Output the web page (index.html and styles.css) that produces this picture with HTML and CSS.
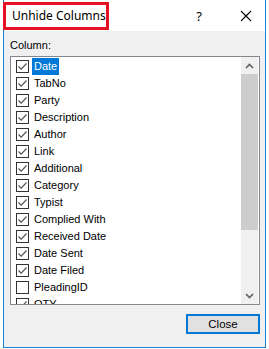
FILE: index.html
```html
<!DOCTYPE html>
<html lang="en">
<head>
    <meta charset="UTF-8">
    <title>Unhide Columns</title>
    <link rel="stylesheet" href="styles.css">
</head>
<body>
<div class="dialog">
    <!-- Title bar -->
    <div class="titlebar">
        <span class="title">Unhide Columns</span>
        <span class="mark"></span>
        <span class="help">?</span>
        <span class="close-x">
            <svg width="12" height="12" viewBox="0 0 12 12"><path d="M1 1 L11 11 M11 1 L1 11" stroke="#000" stroke-width="1.1" fill="none"/></svg>
        </span>
    </div>

    <!-- Body -->
    <div class="content">
        <div class="label">Column:</div>
        <div class="listbox">
            <div class="items">
                <div class="item"><span class="box on"></span><span class="text selected">Date</span></div>
                <div class="item"><span class="box on"></span><span class="text">TabNo</span></div>
                <div class="item"><span class="box on"></span><span class="text">Party</span></div>
                <div class="item"><span class="box on"></span><span class="text">Description</span></div>
                <div class="item"><span class="box on"></span><span class="text">Author</span></div>
                <div class="item"><span class="box on"></span><span class="text">Link</span></div>
                <div class="item"><span class="box on"></span><span class="text">Additional</span></div>
                <div class="item"><span class="box on"></span><span class="text">Category</span></div>
                <div class="item"><span class="box on"></span><span class="text">Typist</span></div>
                <div class="item"><span class="box on"></span><span class="text">Complied With</span></div>
                <div class="item"><span class="box on"></span><span class="text">Received Date</span></div>
                <div class="item"><span class="box on"></span><span class="text">Date Sent</span></div>
                <div class="item"><span class="box on"></span><span class="text">Date Filed</span></div>
                <div class="item"><span class="box"></span><span class="text">PleadingID</span></div>
                <div class="item"><span class="box on"></span><span class="text">QTY</span></div>
            </div>
            <div class="scrollbar">
                <div class="arrow">
                    <svg width="9" height="6" viewBox="0 0 9 6"><path d="M1 5 L4.5 1.5 L8 5" stroke="#606060" stroke-width="1.6" fill="none"/></svg>
                </div>
                <div class="track"><div class="thumb"></div></div>
                <div class="arrow">
                    <svg width="9" height="6" viewBox="0 0 9 6"><path d="M1 1 L4.5 4.5 L8 1" stroke="#606060" stroke-width="1.6" fill="none"/></svg>
                </div>
            </div>
        </div>
        <div class="buttons">
            <button class="btn">Close</button>
        </div>
    </div>
</div>
</body>
</html>
```

FILE: styles.css
```css
* {
    margin: 0;
    padding: 0;
    box-sizing: border-box;
}
body {
    background: #fff;
    font-family: 'Noto Sans', 'Liberation Sans', sans-serif;
    color: #000;
}

/* Окно диалога */
.dialog {
    position: relative;
    margin-left: 3px;
    width: 263px;
    height: 348px;
    border: 1px solid #1883d7;
    border-top: none;
    background: #f0f0f0;
    display: flex;
    flex-direction: column;
}

/* Заголовок */
.titlebar {
    height: 31px;
    background: #fff;
    display: flex;
    align-items: center;
    padding-left: 8px;
}
.title {
    font-size: 12px;
    flex: 1;
}
.mark {
    position: absolute;
    left: -1px;
    top: 2px;
    width: 106px;
    height: 28px;
    border: 3px solid #e81123;
}
.help {
    font-size: 13px;
    width: 20px;
    margin-right: 27px;
    text-align: center;
}
.close-x {
    width: 20px;
    margin-right: 9px;
    display: flex;
    justify-content: center;
}

/* Содержимое */
.content {
    flex: 1;
    padding: 8px 5px 0 6px;
    display: flex;
    flex-direction: column;
    font-family: 'Liberation Sans', 'Noto Sans', sans-serif;
}
.label {
    font-size: 11px;
    height: 17px;
}
.listbox {
    height: 249px;
    border: 1px solid #828790;
    background: #fff;
    display: flex;
}
.items {
    flex: 1;
    overflow: hidden;
    padding: 1px 0 0 5px;
}
.item {
    height: 17px;
    display: flex;
    align-items: center;
    font-size: 11px;
}
.box {
    width: 13px;
    height: 13px;
    border: 1px solid #333;
    background: #fff;
    margin-right: 3px;
}
.box.on {
    background: #fff url("data:image/svg+xml;utf8,<svg xmlns='http://www.w3.org/2000/svg' width='11' height='11'><path d='M1.5 5.5 L4.2 8.2 L9.5 2.5' stroke='%23555' stroke-width='1.2' fill='none'/></svg>") no-repeat center;
}
.text {
    padding: 0 2px;
    height: 17px;
    line-height: 17px;
}
.text.selected {
    background: #0078d7;
    color: #fff;
}

/* Полоса прокрутки */
.scrollbar {
    width: 17px;
    margin-right: 1px;
    background: #f0f0f0;
    display: flex;
    flex-direction: column;
}
.arrow {
    height: 17px;
    display: flex;
    align-items: center;
    justify-content: center;
}
.track {
    flex: 1;
}
.thumb {
    height: 156px;
    background: #cdcdcd;
}

/* Кнопка */
.buttons {
    display: flex;
    justify-content: flex-end;
    padding-top: 9px;
}
.btn {
    width: 74px;
    height: 20px;
    border: 2px solid #0078d7;
    background: #e1e1e1;
    font-family: inherit;
    font-size: 11.5px;
    color: #000;
}
```
